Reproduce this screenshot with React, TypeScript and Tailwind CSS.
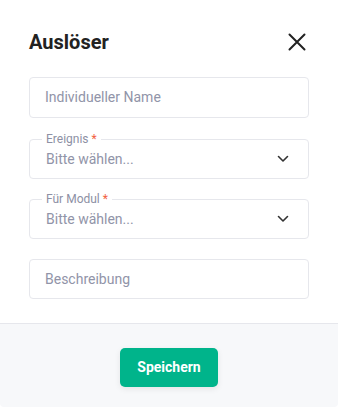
import React from "react";

function Chevron() {
  return (
    <svg width="12" height="8" viewBox="0 0 12 8" fill="none" className="shrink-0">
      <path d="M1.5 1.5L6 6L10.5 1.5" stroke="#333" strokeWidth="1.6" strokeLinecap="round" strokeLinejoin="round" />
    </svg>
  );
}

function SelectField({ label, className = "" }: { label: string; className?: string }) {
  return (
    <div className={"relative h-[40px] rounded-[4px] border border-[#e6e7ec] bg-white flex items-center justify-between pl-[16px] pr-[19px] " + className}>
      <span className="absolute left-[12px] top-[-8px] bg-white px-[4px] text-[12px] leading-[14px] text-[#8d90a4]">
        {label} <span className="text-[#f2613f]">*</span>
      </span>
      <span className="text-[14px] text-[#9194a8] pt-[1px]">Bitte wählen...</span>
      <Chevron />
    </div>
  );
}

function TextField({ placeholder, className = "" }: { placeholder: string; className?: string }) {
  return (
    <div className={"rounded-[4px] border border-[#e6e7ec] bg-white flex items-center pl-[15px] " + className}>
      <span className="text-[14px] text-[#9194a8]">{placeholder}</span>
    </div>
  );
}

export default function App() {
  return (
    <div className="w-[338px] h-[407px] bg-white rounded-[4px] overflow-hidden flex flex-col" style={{ fontFamily: "Roboto, 'Noto Sans', sans-serif" }}>
      <div className="flex items-center justify-between px-[29px] pt-[28px] h-[56px] shrink-0">
        <h1 className="text-[20px] font-bold text-[#222]">Auslöser</h1>
        <svg width="18" height="18" viewBox="0 0 18 18" fill="none" className="mr-[3px]">
          <path d="M1.5 1.5L16.5 16.5M16.5 1.5L1.5 16.5" stroke="#222" strokeWidth="2" strokeLinecap="round" />
        </svg>
      </div>
      <div className="px-[29px] pt-[21px] flex flex-col">
        <TextField placeholder="Individueller Name" className="h-[41px]" />
        <SelectField label="Ereignis" className="mt-[21px]" />
        <SelectField label="Für Modul" className="mt-[20px]" />
        <TextField placeholder="Beschreibung" className="h-[40px] mt-[20px]" />
      </div>
      <div className="mt-auto h-[84px] border-t border-[#e6e7ec] bg-[#f7f8fa] flex justify-center pt-[24px]">
        <button className="h-[39px] w-[98px] rounded-[5px] bg-[#00b48b] text-white text-[14px] font-bold shadow-[0_2px_6px_rgba(0,0,0,0.08)]">
          Speichern
        </button>
      </div>
    </div>
  );
}
